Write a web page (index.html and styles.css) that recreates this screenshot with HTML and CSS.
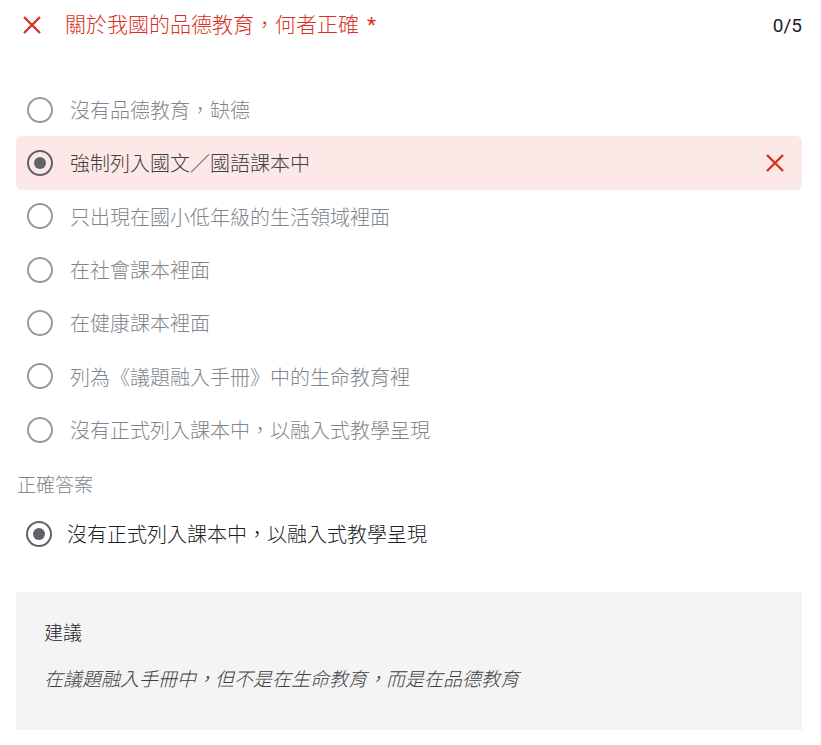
FILE: index.html
```html
<!DOCTYPE html>
<html lang="zh-Hant">
<head>
    <meta charset="UTF-8">
    <meta name="viewport" content="width=device-width, initial-scale=1.0">
    <title>品德教育</title>
    <link rel="stylesheet" href="styles.css">
</head>
<body>
    <div id="container">
        <header class="question-head">
            <svg class="icon-wrong head-icon" width="18" height="18" viewBox="0 0 18 18">
                <path d="M1 1 L17 17 M17 1 L1 17" />
            </svg>
            <span class="question-title">關於我國的品德教育，何者正確<span class="required">*</span></span>
            <span class="score">0/5</span>
        </header>

        <ul class="options">
            <li class="option"><span class="radio"></span><span class="option-text">沒有品德教育，缺德</span></li>
            <li class="option option-wrong"><span class="radio checked"></span><span class="option-text">強制列入國文／國語課本中</span>
                <svg class="icon-wrong row-icon" width="18" height="18" viewBox="0 0 18 18">
                    <path d="M1 1 L17 17 M17 1 L1 17" />
                </svg>
            </li>
            <li class="option"><span class="radio"></span><span class="option-text">只出現在國小低年級的生活領域裡面</span></li>
            <li class="option"><span class="radio"></span><span class="option-text">在社會課本裡面</span></li>
            <li class="option"><span class="radio"></span><span class="option-text">在健康課本裡面</span></li>
            <li class="option"><span class="radio"></span><span class="option-text">列為《議題融入手冊》中的生命教育裡</span></li>
            <li class="option"><span class="radio"></span><span class="option-text">沒有正式列入課本中，以融入式教學呈現</span></li>
        </ul>

        <div class="answer-label">正確答案</div>
        <div class="answer">
            <span class="radio checked"></span><span class="answer-text">沒有正式列入課本中，以融入式教學呈現</span>
        </div>

        <section class="feedback">
            <div class="feedback-title">建議</div>
            <div class="feedback-text">在議題融入手冊中，但不是在生命教育，而是在品德教育</div>
        </section>
    </div>
</body>
</html>
```

FILE: styles.css
```css
html, body {
    height: 100%;
}

body {
    margin: 0;
    background-color: white;
    font-family: Roboto, "Noto Sans CJK TC", sans-serif;
    font-weight: 300;
    color: #202124;
}

#container {
    padding: 0 19px 0 16px;
}

/* 題目標題 */
.question-head {
    display: flex;
    align-items: center;
    height: 50px;
}

.icon-wrong path {
    fill: none;
    stroke: #d93025;
    stroke-width: 2.4;
}

.head-icon {
    margin-left: 7px;
    margin-top: -1px;
}

.question-title {
    margin-left: 24px;
    font-size: 21px;
    line-height: 28px;
    color: #d93025;
    flex: 1;
}

.required {
    margin-left: 8px;
    font-weight: 400;
}

.score {
    font-size: 19px;
    font-weight: 400;
    color: #202124;
}

/* 選項 */
.options {
    list-style: none;
    margin: 33px 0 0;
    padding: 0;
}

.option {
    display: flex;
    align-items: center;
    height: 53.33px;
    padding: 0 18px 0 11px;
    border-radius: 6px;
}

.option-wrong {
    background-color: #fce8e6;
}

.radio {
    box-sizing: border-box;
    width: 26px;
    height: 26px;
    border: 2px solid #9a9a9a;
    border-radius: 50%;
    flex-shrink: 0;
    display: flex;
    align-items: center;
    justify-content: center;
}

.radio.checked {
    border-color: #5f6368;
}

.radio.checked::after {
    content: "";
    width: 12px;
    height: 12px;
    border-radius: 50%;
    background-color: #5f6368;
}

.option-text {
    margin-left: 17px;
    font-size: 20px;
    color: #80868b;
    flex: 1;
}

.option-wrong .option-text {
    color: #3c4043;
}

/* 正確答案 */
.answer-label {
    margin-top: 18px;
    font-size: 19px;
    line-height: 24px;
    color: #80868b;
    padding-left: 1px;
}

.answer {
    display: flex;
    align-items: center;
    height: 53.33px;
    margin-top: 9px;
    padding-left: 10px;
}

.answer-text {
    margin-left: 15px;
    font-size: 20px;
    color: #202124;
}

/* 建議 */
.feedback {
    margin-top: 31px;
    background-color: #f4f4f4;
    padding: 30px 28px 38px;
}

.feedback-title {
    font-size: 19px;
    line-height: 24px;
    color: #202124;
}

.feedback-text {
    margin-top: 22px;
    font-size: 19px;
    line-height: 24px;
    font-style: italic;
    color: #3c4043;
}
```
